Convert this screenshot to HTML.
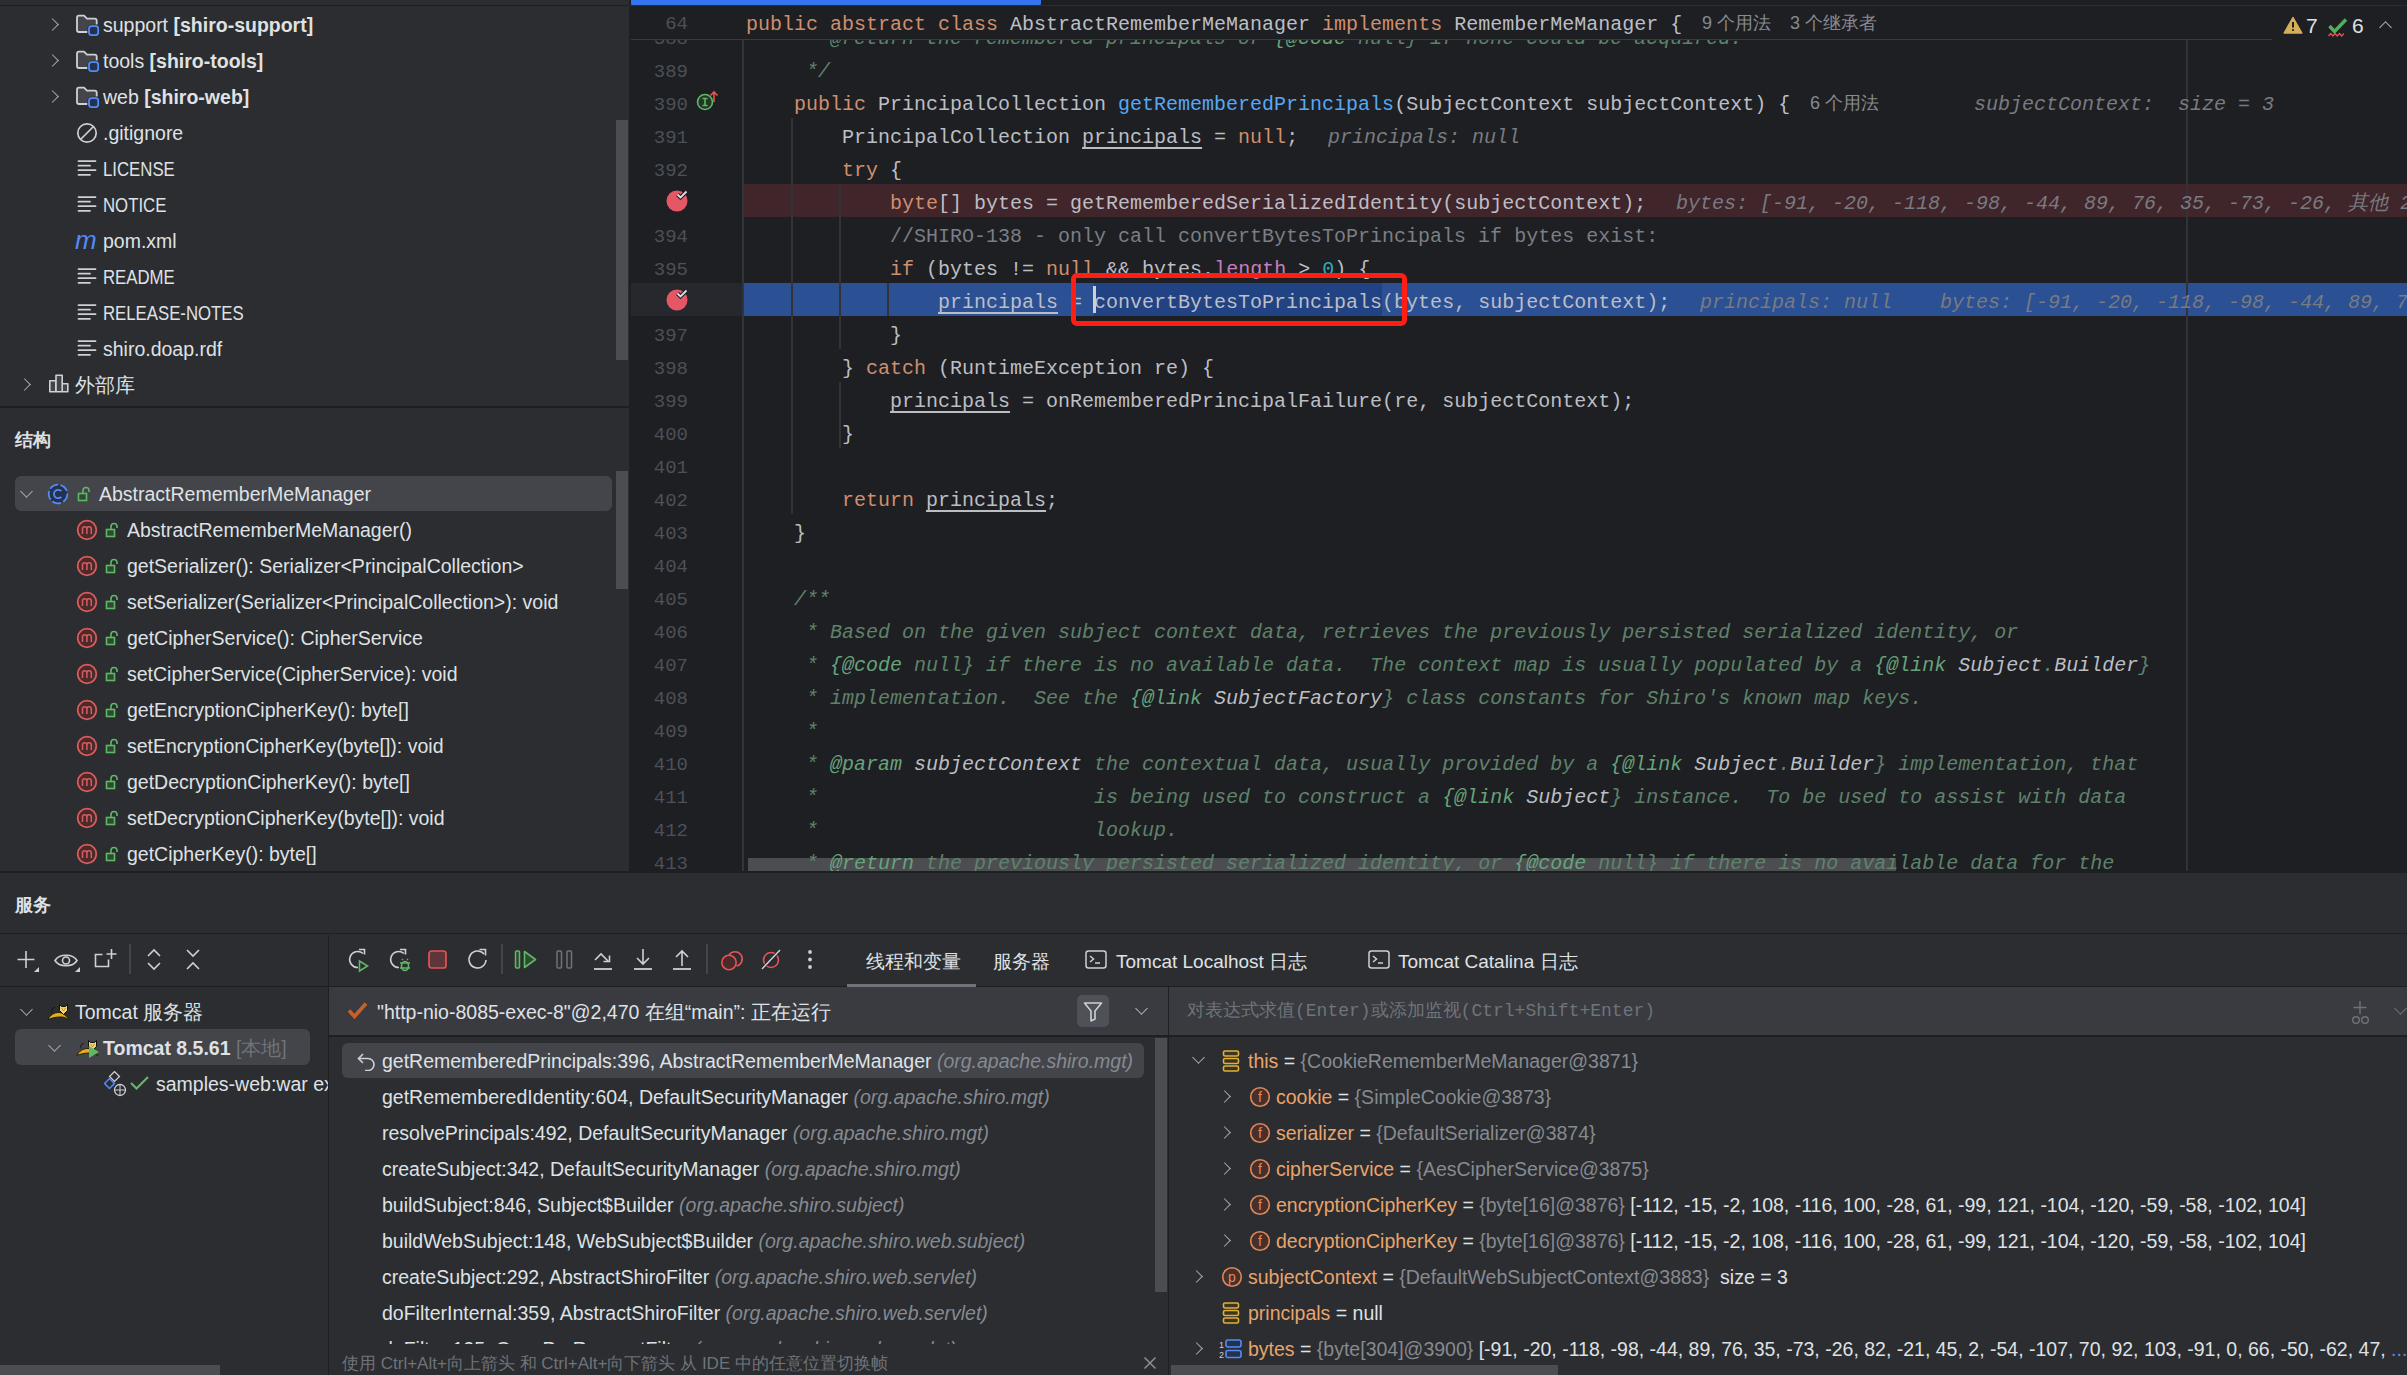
<!DOCTYPE html>
<html><head><meta charset="utf-8">
<style>
*{margin:0;padding:0;box-sizing:border-box}
html,body{width:2407px;height:1375px;overflow:hidden;background:#2B2D30;font-family:"Liberation Sans",sans-serif;color:#DFE1E5}
.a{position:absolute}
.t{position:absolute;white-space:pre;font-size:19.5px;line-height:36px;height:36px}
.b{font-weight:bold}
.m{font-family:"Liberation Mono",monospace}
.chev{position:absolute;width:9px;height:9px;border-right:1.7px solid #A8ABB0;border-bottom:1.7px solid #A8ABB0}
.cr{transform:rotate(-45deg)}
.cd{transform:rotate(45deg)}
.cu{transform:rotate(-135deg)}
/* editor */
.code{position:absolute;left:746px;white-space:pre;font-family:"Liberation Mono",monospace;font-size:20px;line-height:33px;height:33px;color:#BCBEC4}
.ln{position:absolute;left:631px;width:57px;text-align:right;white-space:pre;font-family:"Liberation Mono",monospace;font-size:19px;line-height:33px;height:33px;color:#4B5059}
.k{color:#CF8E6D}
.fn{color:#56A8F5}
.dc{color:#5F826B;font-style:italic}
.dt{color:#67A37C;font-style:italic}
.dw{color:#BCBEC4;font-style:italic}
.cm{color:#7A7E85}
.u{text-decoration:underline;text-underline-offset:4px}
.hint{color:#787B80;font-style:italic}
.num{color:#2AACB8}
.pu{color:#C77DBB}
.gr{color:#868A91}
</style></head><body>

<!-- ===== LEFT PANEL ===== -->
<div class="a" style="left:0;top:0;width:629px;height:871px;background:#2B2D30"></div>
<div class="a" style="left:0;top:5px;width:629px;height:1px;background:#1E1F22"></div>
<div class="chev cr" style="left:48px;top:20px"></div>
<svg class="a" style="left:70px;top:10px" width="40" height="30" viewBox="70 10 40 30"><path d="M79 15.6H84L87 18.6H94.7A2 2 0 0 1 96.7 20.6V32H79A2 2 0 0 1 77 30V17.6A2 2 0 0 1 79 15.6Z" fill="#43454A"/><path d="M87.5 32H79A2 2 0 0 1 77 30V17.6A2 2 0 0 1 79 15.6H84L87 18.6H94.7A2 2 0 0 1 96.7 20.6V24.5" fill="none" stroke="#CED0D6" stroke-width="1.8"/><rect x="87.5" y="24.7" width="12.2" height="11.9" rx="3.5" fill="#2B2D30"/><rect x="89" y="26.2" width="9.2" height="8.9" rx="2.5" fill="#25324D" stroke="#548AF7" stroke-width="1.8"/></svg>
<div class="t" style="left:103px;top:7px">support <span class="b">[shiro-support]</span></div>
<div class="chev cr" style="left:48px;top:56px"></div>
<svg class="a" style="left:70px;top:46px" width="40" height="30" viewBox="70 10 40 30"><path d="M79 15.6H84L87 18.6H94.7A2 2 0 0 1 96.7 20.6V32H79A2 2 0 0 1 77 30V17.6A2 2 0 0 1 79 15.6Z" fill="#43454A"/><path d="M87.5 32H79A2 2 0 0 1 77 30V17.6A2 2 0 0 1 79 15.6H84L87 18.6H94.7A2 2 0 0 1 96.7 20.6V24.5" fill="none" stroke="#CED0D6" stroke-width="1.8"/><rect x="87.5" y="24.7" width="12.2" height="11.9" rx="3.5" fill="#2B2D30"/><rect x="89" y="26.2" width="9.2" height="8.9" rx="2.5" fill="#25324D" stroke="#548AF7" stroke-width="1.8"/></svg>
<div class="t" style="left:103px;top:43px">tools <span class="b">[shiro-tools]</span></div>
<div class="chev cr" style="left:48px;top:92px"></div>
<svg class="a" style="left:70px;top:82px" width="40" height="30" viewBox="70 10 40 30"><path d="M79 15.6H84L87 18.6H94.7A2 2 0 0 1 96.7 20.6V32H79A2 2 0 0 1 77 30V17.6A2 2 0 0 1 79 15.6Z" fill="#43454A"/><path d="M87.5 32H79A2 2 0 0 1 77 30V17.6A2 2 0 0 1 79 15.6H84L87 18.6H94.7A2 2 0 0 1 96.7 20.6V24.5" fill="none" stroke="#CED0D6" stroke-width="1.8"/><rect x="87.5" y="24.7" width="12.2" height="11.9" rx="3.5" fill="#2B2D30"/><rect x="89" y="26.2" width="9.2" height="8.9" rx="2.5" fill="#25324D" stroke="#548AF7" stroke-width="1.8"/></svg>
<div class="t" style="left:103px;top:79px">web <span class="b">[shiro-web]</span></div>
<svg class="a" style="left:76px;top:122px" width="22" height="22" viewBox="0 0 22 22"><circle cx="11" cy="11" r="9.2" fill="none" stroke="#CED0D6" stroke-width="1.7"/><path d="M4.5 17.5L17.5 4.5" stroke="#CED0D6" stroke-width="1.7"/></svg>
<div class="t" style="left:103px;top:115px">.gitignore</div>
<svg class="a" style="left:70px;top:159px" width="30" height="20" viewBox="0 0 30 20"><path d="M8.5 2.1h17M8.5 6.7h11.5M8.5 11.2h17M8.5 15.8h11.5" stroke="#CED0D6" stroke-width="1.8" stroke-linecap="round"/></svg>
<div class="t" style="left:103px;top:151px;transform:scaleX(0.86);transform-origin:0 0">LICENSE</div>
<svg class="a" style="left:70px;top:195px" width="30" height="20" viewBox="0 0 30 20"><path d="M8.5 2.1h17M8.5 6.7h11.5M8.5 11.2h17M8.5 15.8h11.5" stroke="#CED0D6" stroke-width="1.8" stroke-linecap="round"/></svg>
<div class="t" style="left:103px;top:187px;transform:scaleX(0.86);transform-origin:0 0">NOTICE</div>
<svg class="a" style="left:70px;top:267px" width="30" height="20" viewBox="0 0 30 20"><path d="M8.5 2.1h17M8.5 6.7h11.5M8.5 11.2h17M8.5 15.8h11.5" stroke="#CED0D6" stroke-width="1.8" stroke-linecap="round"/></svg>
<div class="t" style="left:103px;top:259px;transform:scaleX(0.86);transform-origin:0 0">README</div>
<svg class="a" style="left:70px;top:303px" width="30" height="20" viewBox="0 0 30 20"><path d="M8.5 2.1h17M8.5 6.7h11.5M8.5 11.2h17M8.5 15.8h11.5" stroke="#CED0D6" stroke-width="1.8" stroke-linecap="round"/></svg>
<div class="t" style="left:103px;top:295px;transform:scaleX(0.86);transform-origin:0 0">RELEASE-NOTES</div>
<svg class="a" style="left:70px;top:339px" width="30" height="20" viewBox="0 0 30 20"><path d="M8.5 2.1h17M8.5 6.7h11.5M8.5 11.2h17M8.5 15.8h11.5" stroke="#CED0D6" stroke-width="1.8" stroke-linecap="round"/></svg>
<div class="t" style="left:103px;top:331px">shiro.doap.rdf</div>
<div class="a" style="left:75px;top:222px;font-size:26px;line-height:36px;font-style:italic;color:#548AF7;font-family:'Liberation Sans',sans-serif">m</div>
<div class="t" style="left:103px;top:223px">pom.xml</div>
<div class="chev cr" style="left:20px;top:380px"></div>
<svg class="a" style="left:45px;top:370px" width="30" height="26" viewBox="45 370 30 26"><path d="M49.8 380.8h6v11h-6zM56 375.3h6.2v16.5H56zM62.2 383.8h5.6v8h-5.6z" fill="#43454A" stroke="#CED0D6" stroke-width="1.6" stroke-linejoin="round"/></svg>
<div class="t" style="left:75px;top:367px">外部库</div>
<div class="a" style="left:616px;top:120px;width:12px;height:240px;background:#4B4D51"></div>
<div class="a" style="left:0;top:406px;width:629px;height:2px;background:#1E1F22"></div>
<div class="t b" style="left:15px;top:422px;font-size:18px">结构</div>
<div class="a" style="left:15px;top:476px;width:597px;height:35px;border-radius:6px;background:#43454A"></div>
<div class="chev cd" style="left:22px;top:487px"></div>
<svg class="a" style="left:47px;top:483px" width="22" height="22" viewBox="0 0 22 22"><circle cx="11" cy="11" r="9.3" fill="#25324D" stroke="#548AF7" stroke-width="1.8" stroke-dasharray="9 2.5"/><path d="M14.3 8.2a4.2 4.2 0 1 0 0 5.6" fill="none" stroke="#548AF7" stroke-width="1.8"/></svg>
<svg class="a" style="left:77px;top:486px" width="14" height="16" viewBox="0 0 14 16"><rect x="1.5" y="7.5" width="8" height="7" fill="#2E4A33" stroke="#5FB865" stroke-width="1.6"/><path d="M6 7.5V4.5a3 3 0 0 1 6 0V6" fill="none" stroke="#5FB865" stroke-width="1.6"/></svg>
<div class="t" style="left:99px;top:476px">AbstractRememberMeManager</div>
<svg class="a" style="left:76px;top:519px" width="22" height="22" viewBox="0 0 22 22"><circle cx="11" cy="11" r="9.3" fill="#4A2A2C" stroke="#DB5C5C" stroke-width="1.8"/><path d="M6.5 15V8.5M6.5 10a2.2 2.2 0 0 1 4.4 0V15M10.9 10a2.2 2.2 0 0 1 4.4 0V15" fill="none" stroke="#DB5C5C" stroke-width="1.5"/></svg>
<svg class="a" style="left:105px;top:522px" width="14" height="16" viewBox="0 0 14 16"><rect x="1.5" y="7.5" width="8" height="7" fill="#2E4A33" stroke="#5FB865" stroke-width="1.6"/><path d="M6 7.5V4.5a3 3 0 0 1 6 0V6" fill="none" stroke="#5FB865" stroke-width="1.6"/></svg>
<div class="t" style="left:127px;top:512px">AbstractRememberMeManager()</div>
<svg class="a" style="left:76px;top:555px" width="22" height="22" viewBox="0 0 22 22"><circle cx="11" cy="11" r="9.3" fill="#4A2A2C" stroke="#DB5C5C" stroke-width="1.8"/><path d="M6.5 15V8.5M6.5 10a2.2 2.2 0 0 1 4.4 0V15M10.9 10a2.2 2.2 0 0 1 4.4 0V15" fill="none" stroke="#DB5C5C" stroke-width="1.5"/></svg>
<svg class="a" style="left:105px;top:558px" width="14" height="16" viewBox="0 0 14 16"><rect x="1.5" y="7.5" width="8" height="7" fill="#2E4A33" stroke="#5FB865" stroke-width="1.6"/><path d="M6 7.5V4.5a3 3 0 0 1 6 0V6" fill="none" stroke="#5FB865" stroke-width="1.6"/></svg>
<div class="t" style="left:127px;top:548px">getSerializer(): Serializer&lt;PrincipalCollection&gt;</div>
<svg class="a" style="left:76px;top:591px" width="22" height="22" viewBox="0 0 22 22"><circle cx="11" cy="11" r="9.3" fill="#4A2A2C" stroke="#DB5C5C" stroke-width="1.8"/><path d="M6.5 15V8.5M6.5 10a2.2 2.2 0 0 1 4.4 0V15M10.9 10a2.2 2.2 0 0 1 4.4 0V15" fill="none" stroke="#DB5C5C" stroke-width="1.5"/></svg>
<svg class="a" style="left:105px;top:594px" width="14" height="16" viewBox="0 0 14 16"><rect x="1.5" y="7.5" width="8" height="7" fill="#2E4A33" stroke="#5FB865" stroke-width="1.6"/><path d="M6 7.5V4.5a3 3 0 0 1 6 0V6" fill="none" stroke="#5FB865" stroke-width="1.6"/></svg>
<div class="t" style="left:127px;top:584px">setSerializer(Serializer&lt;PrincipalCollection&gt;): void</div>
<svg class="a" style="left:76px;top:627px" width="22" height="22" viewBox="0 0 22 22"><circle cx="11" cy="11" r="9.3" fill="#4A2A2C" stroke="#DB5C5C" stroke-width="1.8"/><path d="M6.5 15V8.5M6.5 10a2.2 2.2 0 0 1 4.4 0V15M10.9 10a2.2 2.2 0 0 1 4.4 0V15" fill="none" stroke="#DB5C5C" stroke-width="1.5"/></svg>
<svg class="a" style="left:105px;top:630px" width="14" height="16" viewBox="0 0 14 16"><rect x="1.5" y="7.5" width="8" height="7" fill="#2E4A33" stroke="#5FB865" stroke-width="1.6"/><path d="M6 7.5V4.5a3 3 0 0 1 6 0V6" fill="none" stroke="#5FB865" stroke-width="1.6"/></svg>
<div class="t" style="left:127px;top:620px">getCipherService(): CipherService</div>
<svg class="a" style="left:76px;top:663px" width="22" height="22" viewBox="0 0 22 22"><circle cx="11" cy="11" r="9.3" fill="#4A2A2C" stroke="#DB5C5C" stroke-width="1.8"/><path d="M6.5 15V8.5M6.5 10a2.2 2.2 0 0 1 4.4 0V15M10.9 10a2.2 2.2 0 0 1 4.4 0V15" fill="none" stroke="#DB5C5C" stroke-width="1.5"/></svg>
<svg class="a" style="left:105px;top:666px" width="14" height="16" viewBox="0 0 14 16"><rect x="1.5" y="7.5" width="8" height="7" fill="#2E4A33" stroke="#5FB865" stroke-width="1.6"/><path d="M6 7.5V4.5a3 3 0 0 1 6 0V6" fill="none" stroke="#5FB865" stroke-width="1.6"/></svg>
<div class="t" style="left:127px;top:656px">setCipherService(CipherService): void</div>
<svg class="a" style="left:76px;top:699px" width="22" height="22" viewBox="0 0 22 22"><circle cx="11" cy="11" r="9.3" fill="#4A2A2C" stroke="#DB5C5C" stroke-width="1.8"/><path d="M6.5 15V8.5M6.5 10a2.2 2.2 0 0 1 4.4 0V15M10.9 10a2.2 2.2 0 0 1 4.4 0V15" fill="none" stroke="#DB5C5C" stroke-width="1.5"/></svg>
<svg class="a" style="left:105px;top:702px" width="14" height="16" viewBox="0 0 14 16"><rect x="1.5" y="7.5" width="8" height="7" fill="#2E4A33" stroke="#5FB865" stroke-width="1.6"/><path d="M6 7.5V4.5a3 3 0 0 1 6 0V6" fill="none" stroke="#5FB865" stroke-width="1.6"/></svg>
<div class="t" style="left:127px;top:692px">getEncryptionCipherKey(): byte[]</div>
<svg class="a" style="left:76px;top:735px" width="22" height="22" viewBox="0 0 22 22"><circle cx="11" cy="11" r="9.3" fill="#4A2A2C" stroke="#DB5C5C" stroke-width="1.8"/><path d="M6.5 15V8.5M6.5 10a2.2 2.2 0 0 1 4.4 0V15M10.9 10a2.2 2.2 0 0 1 4.4 0V15" fill="none" stroke="#DB5C5C" stroke-width="1.5"/></svg>
<svg class="a" style="left:105px;top:738px" width="14" height="16" viewBox="0 0 14 16"><rect x="1.5" y="7.5" width="8" height="7" fill="#2E4A33" stroke="#5FB865" stroke-width="1.6"/><path d="M6 7.5V4.5a3 3 0 0 1 6 0V6" fill="none" stroke="#5FB865" stroke-width="1.6"/></svg>
<div class="t" style="left:127px;top:728px">setEncryptionCipherKey(byte[]): void</div>
<svg class="a" style="left:76px;top:771px" width="22" height="22" viewBox="0 0 22 22"><circle cx="11" cy="11" r="9.3" fill="#4A2A2C" stroke="#DB5C5C" stroke-width="1.8"/><path d="M6.5 15V8.5M6.5 10a2.2 2.2 0 0 1 4.4 0V15M10.9 10a2.2 2.2 0 0 1 4.4 0V15" fill="none" stroke="#DB5C5C" stroke-width="1.5"/></svg>
<svg class="a" style="left:105px;top:774px" width="14" height="16" viewBox="0 0 14 16"><rect x="1.5" y="7.5" width="8" height="7" fill="#2E4A33" stroke="#5FB865" stroke-width="1.6"/><path d="M6 7.5V4.5a3 3 0 0 1 6 0V6" fill="none" stroke="#5FB865" stroke-width="1.6"/></svg>
<div class="t" style="left:127px;top:764px">getDecryptionCipherKey(): byte[]</div>
<svg class="a" style="left:76px;top:807px" width="22" height="22" viewBox="0 0 22 22"><circle cx="11" cy="11" r="9.3" fill="#4A2A2C" stroke="#DB5C5C" stroke-width="1.8"/><path d="M6.5 15V8.5M6.5 10a2.2 2.2 0 0 1 4.4 0V15M10.9 10a2.2 2.2 0 0 1 4.4 0V15" fill="none" stroke="#DB5C5C" stroke-width="1.5"/></svg>
<svg class="a" style="left:105px;top:810px" width="14" height="16" viewBox="0 0 14 16"><rect x="1.5" y="7.5" width="8" height="7" fill="#2E4A33" stroke="#5FB865" stroke-width="1.6"/><path d="M6 7.5V4.5a3 3 0 0 1 6 0V6" fill="none" stroke="#5FB865" stroke-width="1.6"/></svg>
<div class="t" style="left:127px;top:800px">setDecryptionCipherKey(byte[]): void</div>
<svg class="a" style="left:76px;top:843px" width="22" height="22" viewBox="0 0 22 22"><circle cx="11" cy="11" r="9.3" fill="#4A2A2C" stroke="#DB5C5C" stroke-width="1.8"/><path d="M6.5 15V8.5M6.5 10a2.2 2.2 0 0 1 4.4 0V15M10.9 10a2.2 2.2 0 0 1 4.4 0V15" fill="none" stroke="#DB5C5C" stroke-width="1.5"/></svg>
<svg class="a" style="left:105px;top:846px" width="14" height="16" viewBox="0 0 14 16"><rect x="1.5" y="7.5" width="8" height="7" fill="#2E4A33" stroke="#5FB865" stroke-width="1.6"/><path d="M6 7.5V4.5a3 3 0 0 1 6 0V6" fill="none" stroke="#5FB865" stroke-width="1.6"/></svg>
<div class="t" style="left:127px;top:836px">getCipherKey(): byte[]</div>
<div class="a" style="left:616px;top:471px;width:12px;height:118px;background:#4B4D51"></div>

<!-- ===== EDITOR ===== -->
<div class="a" style="left:629px;top:0;width:1778px;height:871px;background:#1E1F22"></div>
<!--EDITOR-->
<div class="a" style="left:631px;top:0;width:410px;height:6px;border-radius:0 0 3px 3px;background:#3574F0"></div>
<div class="a" style="left:629px;top:5px;width:1778px;height:1px;background:#2B2D30"></div>
<div class="a" style="left:744px;top:184px;width:1663px;height:33px;background:#40252B"></div>
<div class="a" style="left:631px;top:283px;width:111px;height:33px;background:#26282D"></div>
<div class="a" style="left:744px;top:283px;width:1663px;height:33px;background:#2B5094"></div>
<div class="a" style="left:1094px;top:283px;width:288px;height:33px;background:#214283"></div>
<div class="a" style="left:748px;top:858px;width:1148px;height:13px;background:#4B4D51"></div>
<div class="a" style="left:742px;top:40px;width:2px;height:831px;background:#313438"></div>
<div class="a" style="left:2186px;top:40px;width:2px;height:831px;background:#313337"></div>
<div class="a" style="left:791px;top:118px;width:2px;height:396px;background:#313337"></div>
<div class="a" style="left:839px;top:184px;width:2px;height:165px;background:#313337"></div>
<div class="a" style="left:839px;top:382px;width:2px;height:66px;background:#313337"></div>
<div class="a" style="left:887px;top:283px;width:2px;height:33px;background:#313337"></div>
<div class="code" style="top:22px">     <span class="dc">* @return the remembered principals or </span><span class="dt">{@code </span><span class="dc">null} if none could be acquired.</span></div>
<div class="code" style="top:55px"><span class="dc">     */</span></div>
<div class="code" style="top:88px">    <span class="k">public </span>PrincipalCollection <span class="fn">getRememberedPrincipals</span>(SubjectContext subjectContext) {</div>
<div class="code" style="top:121px">        PrincipalCollection <span class="u">principals</span> = <span class="k">null</span>;</div>
<div class="code" style="top:154px">        <span class="k">try</span> {</div>
<div class="code" style="top:187px">            <span class="k">byte</span>[] bytes = getRememberedSerializedIdentity(subjectContext);</div>
<div class="code" style="top:220px"><span class="cm">            //SHIRO-138 - only call convertBytesToPrincipals if bytes exist:</span></div>
<div class="code" style="top:253px">            <span class="k">if</span> (bytes != <span class="k">null</span> &amp;&amp; bytes.<span class="pu">length</span> &gt; <span class="num">0</span>) {</div>
<div class="code" style="top:286px">                <span class="u">principals</span> = convertBytesToPrincipals(bytes, subjectContext);</div>
<div class="code" style="top:319px">            }</div>
<div class="code" style="top:352px">        } <span class="k">catch</span> (RuntimeException re) {</div>
<div class="code" style="top:385px">            <span class="u">principals</span> = onRememberedPrincipalFailure(re, subjectContext);</div>
<div class="code" style="top:418px">        }</div>
<div class="code" style="top:484px">        <span class="k">return </span><span class="u">principals</span>;</div>
<div class="code" style="top:517px">    }</div>
<div class="code" style="top:583px"><span class="dc">    /**</span></div>
<div class="code" style="top:616px">     <span class="dc">* Based on the given subject context data, retrieves the previously persisted serialized identity, or</span></div>
<div class="code" style="top:649px">     <span class="dc">* </span><span class="dt">{@code </span><span class="dc">null} if there is no available data.  The context map is usually populated by a </span><span class="dt">{@link </span><span class="dw">Subject</span><span class="dc">.</span><span class="dw">Builder</span><span class="dc">}</span></div>
<div class="code" style="top:682px">     <span class="dc">* implementation.  See the </span><span class="dt">{@link </span><span class="dw">SubjectFactory</span><span class="dc">} class constants for Shiro's known map keys.</span></div>
<div class="code" style="top:715px">     <span class="dc">*</span></div>
<div class="code" style="top:748px">     <span class="dc">* </span><span class="dt">@param </span><span class="dw">subjectContext</span><span class="dc"> the contextual data, usually provided by a </span><span class="dt">{@link </span><span class="dw">Subject</span><span class="dc">.</span><span class="dw">Builder</span><span class="dc">} implementation, that</span></div>
<div class="code" style="top:781px">     <span class="dc">*                       is being used to construct a </span><span class="dt">{@link </span><span class="dw">Subject</span><span class="dc">} instance.  To be used to assist with data</span></div>
<div class="code" style="top:814px">     <span class="dc">*                       lookup.</span></div>
<div class="code" style="top:847px">     <span class="dc">* </span><span class="dt">@return </span><span class="dc">the previously persisted serialized identity, or </span><span class="dt">{@code </span><span class="dc">null} if there is no available data for the</span></div>
<div class="ln" style="top:23px">388</div>
<div class="ln" style="top:56px">389</div>
<div class="ln" style="top:89px">390</div>
<div class="ln" style="top:122px">391</div>
<div class="ln" style="top:155px">392</div>
<div class="ln" style="top:221px">394</div>
<div class="ln" style="top:254px">395</div>
<div class="ln" style="top:320px">397</div>
<div class="ln" style="top:353px">398</div>
<div class="ln" style="top:386px">399</div>
<div class="ln" style="top:419px">400</div>
<div class="ln" style="top:452px">401</div>
<div class="ln" style="top:485px">402</div>
<div class="ln" style="top:518px">403</div>
<div class="ln" style="top:551px">404</div>
<div class="ln" style="top:584px">405</div>
<div class="ln" style="top:617px">406</div>
<div class="ln" style="top:650px">407</div>
<div class="ln" style="top:683px">408</div>
<div class="ln" style="top:716px">409</div>
<div class="ln" style="top:749px">410</div>
<div class="ln" style="top:782px">411</div>
<div class="ln" style="top:815px">412</div>
<div class="ln" style="top:848px">413</div>
<div class="t gr" style="left:1810px;top:85px;font-size:18px">6 个用法</div>
<div class="code hint" style="left:1974px;top:88px">subjectContext:  size = 3</div>
<div class="code hint" style="left:1328px;top:121px">principals: null</div>
<div class="code hint" style="left:1676px;top:187px">bytes: [-91, -20, -118, -98, -44, 89, 76, 35, -73, -26, 其他 2</div>
<div class="code hint" style="left:1700px;top:286px">principals: null</div>
<div class="code hint hb" style="left:1940px;top:286px">bytes: [-91, -20, -118, -98, -44, 89, 7</div>
<div class="a" style="left:629px;top:6px;width:1778px;height:34px;background:#1E1F22"></div>
<div class="a" style="left:631px;top:39px;width:1641px;height:1px;background:#393B40"></div>
<div class="ln" style="top:8px">64</div>
<div class="code" style="top:8px"><span class="k">public abstract class </span>AbstractRememberMeManager <span class="k">implements </span>RememberMeManager {</div>
<div class="t gr" style="left:1702px;top:5px;font-size:18px">9 个用法</div>
<div class="t gr" style="left:1790px;top:5px;font-size:18px">3 个继承者</div>
<svg class="a" style="left:2283px;top:16px" width="20" height="19" viewBox="0 0 20 19"><path d="M10 1.5L18.8 17H1.2Z" fill="#D6AE58" stroke="#D6AE58" stroke-width="1.5" stroke-linejoin="round"/><path d="M10 6v5.5" stroke="#1E1F22" stroke-width="2"/><circle cx="10" cy="14" r="1.1" fill="#1E1F22"/></svg>
<div class="t" style="left:2306px;top:8px;font-size:21px">7</div>
<svg class="a" style="left:2327px;top:16px" width="22" height="22" viewBox="0 0 22 22"><path d="M2.5 10l5 5.5L19 3.5" fill="none" stroke="#4FAF5B" stroke-width="3.4"/><path d="M1.5 20l2.2-2.5 2.2 2.5 2.2-2.5 2.2 2.5 2.2-2.5 2.2 2.5 2.2-2.5" fill="none" stroke="#E55353" stroke-width="1.2"/></svg>
<div class="t" style="left:2352px;top:8px;font-size:21px">6</div>
<div class="chev cu" style="left:2381px;top:23px;border-color:#B0B3B8"></div>
<svg class="a" style="left:665px;top:186px" width="26" height="26" viewBox="0 0 26 26"><circle cx="12" cy="15" r="10.5" fill="#E55765"/><path d="M12.5 8.5l3 3 6-6" fill="none" stroke="#1E1F22" stroke-width="4"/><path d="M12.5 8.5l3 3 6-6" fill="none" stroke="#DFE1E5" stroke-width="1.8"/></svg>
<svg class="a" style="left:665px;top:285px" width="26" height="26" viewBox="0 0 26 26"><circle cx="12" cy="15" r="10.5" fill="#E55765"/><path d="M12.5 8.5l3 3 6-6" fill="none" stroke="#1E1F22" stroke-width="4"/><path d="M12.5 8.5l3 3 6-6" fill="none" stroke="#DFE1E5" stroke-width="1.8"/></svg>
<svg class="a" style="left:696px;top:90px" width="24" height="22" viewBox="0 0 24 22"><circle cx="9" cy="12" r="7.5" fill="#253627" stroke="#5FB865" stroke-width="1.6"/><path d="M6.5 8.5h5M9 8.5v7M6.5 15.5h5" stroke="#5FB865" stroke-width="1.6"/><path d="M18 12V2M14.5 5.5L18 2l3.5 3.5" fill="none" stroke="#E55353" stroke-width="1.6"/></svg>
<div class="a" style="left:1071px;top:273px;width:336px;height:53px;border:5px solid #FF1E14;border-radius:6px"></div>
<div class="a" style="left:1093px;top:286px;width:3px;height:27px;background:#CED0D6"></div>
<!--/EDITOR-->

<!-- ===== BOTTOM PANEL ===== -->
<div class="a" style="left:0;top:871px;width:2407px;height:2px;background:#1E1F22"></div>
<!--BOTTOM-->
<div class="t b" style="left:15px;top:887px;font-size:18px">服务</div>
<div class="a" style="left:0;top:933px;width:2407px;height:1px;background:#1E1F22"></div>
<div class="a" style="left:0;top:986px;width:328px;height:1px;background:#1E1F22"></div>
<div class="a" style="left:328px;top:935px;width:1px;height:440px;background:#1E1F22"></div>
<div class="a" style="left:329px;top:986px;width:2078px;height:1px;background:#1E1F22"></div>
<svg class="a" style="left:16px;top:949px" width="24" height="24" viewBox="0 0 24 24"><path d="M10 2v17M1.5 10.5h17" stroke="#CED0D6" stroke-width="1.6"/><path d="M23 18v5h-5z" fill="#CED0D6"/></svg>
<svg class="a" style="left:53px;top:949px" width="28" height="24" viewBox="0 0 28 24"><path d="M2 11.5c4-7 18-7 22 0c-4 7-18 7-22 0z" fill="none" stroke="#CED0D6" stroke-width="1.6"/><circle cx="13" cy="11.5" r="3.5" fill="none" stroke="#CED0D6" stroke-width="1.6"/><path d="M27 18v5h-5z" fill="#CED0D6"/></svg>
<svg class="a" style="left:93px;top:947px" width="26" height="24" viewBox="0 0 26 24"><path d="M9.5 7.5h-7v12h13v-7" fill="none" stroke="#CED0D6" stroke-width="1.6"/><path d="M18.5 2v10M13.5 7h10" stroke="#CED0D6" stroke-width="1.6"/></svg>
<div class="a" style="left:129px;top:944px;width:2px;height:30px;background:#43454A"></div>
<svg class="a" style="left:143px;top:947px" width="22" height="26" viewBox="0 0 22 26"><path d="M5 9l6-6 6 6M5 16l6 6 6-6" fill="none" stroke="#CED0D6" stroke-width="1.6"/></svg>
<svg class="a" style="left:182px;top:947px" width="22" height="26" viewBox="0 0 22 26"><path d="M5 3l6 6 6-6M5 22l6-6 6 6" fill="none" stroke="#CED0D6" stroke-width="1.6"/></svg>
<svg class="a" style="left:346px;top:947px" width="26" height="26" viewBox="0 0 26 26"><path d="M17 6.5a8 8 0 1 0-5 14" fill="none" stroke="#CED0D6" stroke-width="1.6"/><path d="M13 2.5h5.5v5" fill="none" stroke="#CED0D6" stroke-width="1.6"/><path d="M13.5 14v10l8-5z" fill="none" stroke="#5FB865" stroke-width="1.6"/></svg>
<svg class="a" style="left:387px;top:947px" width="26" height="26" viewBox="0 0 26 26"><path d="M17 6.5a8 8 0 1 0-5 14" fill="none" stroke="#CED0D6" stroke-width="1.6"/><path d="M13 2.5h5.5v5" fill="none" stroke="#CED0D6" stroke-width="1.6"/><ellipse cx="18" cy="19" rx="3.5" ry="4.5" fill="none" stroke="#5FB865" stroke-width="1.6"/><path d="M13 16h10M13 21h10M16 13l-1-1M20 13l1-1" stroke="#5FB865" stroke-width="1.4"/></svg>
<svg class="a" style="left:427px;top:949px" width="22" height="22" viewBox="0 0 22 22"><rect x="2" y="2" width="17" height="17" rx="2.5" fill="#5E3538" stroke="#E55353" stroke-width="1.7"/></svg>
<svg class="a" style="left:465px;top:947px" width="26" height="26" viewBox="0 0 26 26"><path d="M19 7a8.5 8.5 0 1 0 2 6" fill="none" stroke="#CED0D6" stroke-width="1.6"/><path d="M14.5 2.5h6v6" fill="none" stroke="#CED0D6" stroke-width="1.6"/></svg>
<div class="a" style="left:501px;top:944px;width:2px;height:30px;background:#43454A"></div>
<svg class="a" style="left:514px;top:949px" width="24" height="22" viewBox="0 0 24 22"><rect x="1.5" y="2" width="4" height="17" rx="1" fill="#2E4A33" stroke="#5FB865" stroke-width="1.5"/><path d="M10.5 2.5v16l11-8z" fill="#2E4A33" stroke="#5FB865" stroke-width="1.6" stroke-linejoin="round"/></svg>
<svg class="a" style="left:555px;top:949px" width="22" height="22" viewBox="0 0 22 22"><rect x="2" y="2" width="4.5" height="17" rx="1" fill="none" stroke="#6F737A" stroke-width="1.5"/><rect x="12" y="2" width="4.5" height="17" rx="1" fill="none" stroke="#6F737A" stroke-width="1.5"/></svg>
<svg class="a" style="left:592px;top:947px" width="24" height="26" viewBox="0 0 24 26"><path d="M3 13l6-6 7 7" fill="none" stroke="#CED0D6" stroke-width="1.6"/><path d="M11.5 14.5h6v-6" fill="none" stroke="#CED0D6" stroke-width="1.6"/><path d="M2 22h18" stroke="#CED0D6" stroke-width="1.8"/></svg>
<svg class="a" style="left:632px;top:947px" width="24" height="26" viewBox="0 0 24 26"><path d="M11 2v15M5 11l6 6 6-6" fill="none" stroke="#CED0D6" stroke-width="1.6"/><path d="M2 22h18" stroke="#CED0D6" stroke-width="1.8"/></svg>
<svg class="a" style="left:671px;top:947px" width="24" height="26" viewBox="0 0 24 26"><path d="M11 19V4M5 10l6-6 6 6" fill="none" stroke="#CED0D6" stroke-width="1.6"/><path d="M2 22h18" stroke="#CED0D6" stroke-width="1.8"/></svg>
<div class="a" style="left:706px;top:944px;width:2px;height:30px;background:#43454A"></div>
<svg class="a" style="left:720px;top:947px" width="26" height="26" viewBox="0 0 26 26"><circle cx="9" cy="15.5" r="7.2" fill="#4A2A2C" stroke="#E55353" stroke-width="1.6"/><path d="M9 8a7.2 7.2 0 1 1 7.5 11" fill="none" stroke="#E55353" stroke-width="1.6"/></svg>
<svg class="a" style="left:759px;top:947px" width="26" height="26" viewBox="0 0 26 26"><circle cx="12" cy="13" r="7.5" fill="none" stroke="#E55353" stroke-width="1.6"/><path d="M3 22L21 3" stroke="#1E1F22" stroke-width="3"/><path d="M3 22L21 3" stroke="#CED0D6" stroke-width="1.6"/></svg>
<svg class="a" style="left:804px;top:948px" width="12" height="24" viewBox="0 0 12 24"><circle cx="6" cy="4" r="1.9" fill="#CED0D6"/><circle cx="6" cy="11.5" r="1.9" fill="#CED0D6"/><circle cx="6" cy="19" r="1.9" fill="#CED0D6"/></svg>
<div class="t" style="left:866px;top:944px;font-size:19px">线程和变量</div>
<div class="a" style="left:847px;top:984px;width:129px;height:3px;background:#6F737A"></div>
<div class="t" style="left:993px;top:944px;font-size:19px">服务器</div>
<svg class="a" style="left:1085px;top:950px" width="23" height="20" viewBox="0 0 23 20"><rect x="1" y="1" width="20" height="17" rx="2.5" fill="none" stroke="#CED0D6" stroke-width="1.5"/><path d="M5 6l3.5 3L5 12M10 13h5" fill="none" stroke="#CED0D6" stroke-width="1.5"/></svg>
<div class="t" style="left:1116px;top:944px;font-size:19px">Tomcat Localhost 日志</div>
<svg class="a" style="left:1368px;top:950px" width="23" height="20" viewBox="0 0 23 20"><rect x="1" y="1" width="20" height="17" rx="2.5" fill="none" stroke="#CED0D6" stroke-width="1.5"/><path d="M5 6l3.5 3L5 12M10 13h5" fill="none" stroke="#CED0D6" stroke-width="1.5"/></svg>
<div class="t" style="left:1398px;top:944px;font-size:19px">Tomcat Catalina 日志</div>
<div class="chev cd" style="left:22px;top:1005px"></div>
<svg class="a" style="left:47px;top:1003px" width="24" height="18" viewBox="0 0 24 18"><path d="M1 16.5C3 12 7 9.5 12 9.5c3 0 6 2 10 7c-3-1.5-6-3-9-2.5C8 14 5 15 1 16.5z" fill="#E2AE1E" stroke="#1A1508" stroke-width=".9"/><path d="M5 9.5c-1-3 1-5 3-5" fill="none" stroke="#111" stroke-width="1"/><path d="M12.5 1.5l2 2h4l2-2v6l-4 4l-4-4z" fill="#EFD472" stroke="#111" stroke-width="1"/><path d="M14.5 5l2 3l2-3" fill="none" stroke="#B08A20" stroke-width=".8"/></svg>
<div class="t" style="left:75px;top:994px">Tomcat 服务器</div>
<div class="a" style="left:15px;top:1029px;width:295px;height:36px;border-radius:6px;background:#43454A"></div>
<div class="chev cd" style="left:50px;top:1041px"></div>
<svg class="a" style="left:76px;top:1039px" width="24" height="18" viewBox="0 0 24 18"><path d="M1 16.5C3 12 7 9.5 12 9.5c3 0 6 2 10 7c-3-1.5-6-3-9-2.5C8 14 5 15 1 16.5z" fill="#E2AE1E" stroke="#1A1508" stroke-width=".9"/><path d="M5 9.5c-1-3 1-5 3-5" fill="none" stroke="#111" stroke-width="1"/><path d="M12.5 1.5l2 2h4l2-2v6l-4 4l-4-4z" fill="#EFD472" stroke="#111" stroke-width="1"/><path d="M14.5 5l2 3l2-3" fill="none" stroke="#B08A20" stroke-width=".8"/></svg>
<svg class="a" style="left:88px;top:1045px" width="12" height="14" viewBox="0 0 12 14"><path d="M1 1v12l10-6z" fill="#5FB865"/></svg>
<div class="t b" style="left:103px;top:1030px">Tomcat 8.5.61 <span style="font-weight:normal;color:#6F737A">[本地]</span></div>
<svg class="a" style="left:104px;top:1071px" width="28" height="26" viewBox="0 0 28 26"><rect x="7" y="2" width="7" height="7" transform="rotate(45 10.5 5.5)" fill="none" stroke="#CED0D6" stroke-width="1.3"/><rect x="2" y="9" width="7" height="7" transform="rotate(45 5.5 12.5)" fill="none" stroke="#548AF7" stroke-width="1.5"/><circle cx="16" cy="19" r="5.5" fill="#2B2D30" stroke="#CED0D6" stroke-width="1.3"/><path d="M10.5 19h11M16 13.5v11" stroke="#CED0D6" stroke-width="1"/></svg>
<svg class="a" style="left:129px;top:1074px" width="22" height="18" viewBox="0 0 22 18"><path d="M2 9l5.5 5.5L19 3" fill="none" stroke="#5FB865" stroke-width="2.2"/></svg>
<div class="a" style="left:0;top:1066px;width:328px;height:36px;overflow:hidden"><div class="t" style="left:156px;top:0">samples-web:war explo</div></div>
<div class="a" style="left:0;top:1365px;width:220px;height:10px;background:#4B4D51"></div>
<div class="a" style="left:329px;top:987px;width:839px;height:48px;background:#393B40"></div>
<div class="a" style="left:329px;top:1035px;width:839px;height:2px;background:#1E1F22"></div>
<svg class="a" style="left:346px;top:1000px" width="24" height="22" viewBox="0 0 24 22"><path d="M3 10.5l5.5 6L20 3.5" fill="none" stroke="#C8602A" stroke-width="3.6"/></svg>
<div class="t" style="left:377px;top:994px">"http-nio-8085-exec-8"@2,470 在组“main”: 正在运行</div>
<div class="a" style="left:1077px;top:995px;width:32px;height:32px;border-radius:5px;background:#4E5157"></div>
<svg class="a" style="left:1082px;top:1000px" width="22" height="22" viewBox="0 0 22 22"><path d="M2.5 3h17l-6.5 8v8l-4 2v-10z" fill="none" stroke="#CED0D6" stroke-width="1.6" stroke-linejoin="round"/></svg>
<div class="chev cd" style="left:1137px;top:1004px;border-color:#B0B3B8"></div>
<div class="a" style="left:342px;top:1043px;width:802px;height:35px;border-radius:6px;background:#43454A"></div>
<svg class="a" style="left:356px;top:1051px" width="22" height="20" viewBox="0 0 22 20"><path d="M7 3L2.5 7.5 7 12" fill="none" stroke="#CED0D6" stroke-width="1.6"/><path d="M3 7.5h9a6 6 0 0 1 0 12H9" fill="none" stroke="#CED0D6" stroke-width="1.6"/></svg>
<div class="a" style="left:330px;top:1037px;width:825px;height:307px;overflow:hidden">
<div class="t" style="left:52px;top:6px">getRememberedPrincipals:396, AbstractRememberMeManager <i style="color:#868A91">(org.apache.shiro.mgt)</i></div>
<div class="t" style="left:52px;top:42px">getRememberedIdentity:604, DefaultSecurityManager <i style="color:#868A91">(org.apache.shiro.mgt)</i></div>
<div class="t" style="left:52px;top:78px">resolvePrincipals:492, DefaultSecurityManager <i style="color:#868A91">(org.apache.shiro.mgt)</i></div>
<div class="t" style="left:52px;top:114px">createSubject:342, DefaultSecurityManager <i style="color:#868A91">(org.apache.shiro.mgt)</i></div>
<div class="t" style="left:52px;top:150px">buildSubject:846, Subject$Builder <i style="color:#868A91">(org.apache.shiro.subject)</i></div>
<div class="t" style="left:52px;top:186px">buildWebSubject:148, WebSubject$Builder <i style="color:#868A91">(org.apache.shiro.web.subject)</i></div>
<div class="t" style="left:52px;top:222px">createSubject:292, AbstractShiroFilter <i style="color:#868A91">(org.apache.shiro.web.servlet)</i></div>
<div class="t" style="left:52px;top:258px">doFilterInternal:359, AbstractShiroFilter <i style="color:#868A91">(org.apache.shiro.web.servlet)</i></div>
<div class="t" style="left:52px;top:294px">doFilter:125, OncePerRequestFilter <i style="color:#868A91">(org.apache.shiro.web.servlet)</i></div>
</div>
<div class="a" style="left:1155px;top:1038px;width:12px;height:254px;background:#4B4D51"></div>
<div class="t" style="left:342px;top:1346px;font-size:17px;color:#6F737A">使用 Ctrl+Alt+向上箭头 和 Ctrl+Alt+向下箭头 从 IDE 中的任意位置切换帧</div>
<svg class="a" style="left:1143px;top:1356px" width="14" height="14" viewBox="0 0 14 14"><path d="M1.5 1.5l11 11M12.5 1.5l-11 11" stroke="#8C8F94" stroke-width="1.5"/></svg>
<div class="a" style="left:1169px;top:987px;width:1238px;height:48px;background:#393B40"></div>
<div class="a" style="left:1168px;top:987px;width:1px;height:388px;background:#1E1F22"></div>
<div class="a" style="left:1169px;top:1035px;width:1238px;height:2px;background:#1E1F22"></div>
<div class="code" style="left:1187px;top:995px;font-size:18px;line-height:33px;color:#6F737A">对表达式求值(Enter)或添加监视(Ctrl+Shift+Enter)</div>
<svg class="a" style="left:2348px;top:1000px" width="26" height="26" viewBox="0 0 26 26"><path d="M12 1v13M5.5 7.5h13" stroke="#6F737A" stroke-width="1.4"/><circle cx="8" cy="20" r="3.3" fill="none" stroke="#6F737A" stroke-width="1.4"/><circle cx="17" cy="20" r="3.3" fill="none" stroke="#6F737A" stroke-width="1.4"/></svg>
<div class="chev cd" style="left:2396px;top:1004px;border-color:#6F737A"></div>
<div class="chev cd" style="left:1194px;top:1053px"></div>
<svg class="a" style="left:1222px;top:1049px" width="18" height="24" viewBox="0 0 18 24"><rect x="1.5" y="2" width="15" height="5" rx="1.5" fill="#3C3520" stroke="#E0B03A" stroke-width="1.6"/><rect x="1.5" y="9.5" width="15" height="5" rx="1.5" fill="#3C3520" stroke="#E0B03A" stroke-width="1.6"/><rect x="1.5" y="17" width="15" height="5" rx="1.5" fill="#3C3520" stroke="#E0B03A" stroke-width="1.6"/></svg>
<div class="t" style="left:1248px;top:1043px"><span style="color:#E8A46C">this</span> = <span style="color:#868A91">{CookieRememberMeManager@3871}</span></div>
<div class="chev cr" style="left:1220px;top:1092px"></div>
<svg class="a" style="left:1249px;top:1086px" width="22" height="22" viewBox="0 0 22 22"><circle cx="11" cy="11" r="9.3" fill="#47302A" stroke="#E0875A" stroke-width="1.6"/><text x="11" y="16" text-anchor="middle" font-family="Liberation Sans" font-size="14" fill="#E0875A">f</text></svg>
<div class="t" style="left:1276px;top:1079px"><span style="color:#E8A46C">cookie</span> = <span style="color:#868A91">{SimpleCookie@3873}</span></div>
<div class="chev cr" style="left:1220px;top:1128px"></div>
<svg class="a" style="left:1249px;top:1122px" width="22" height="22" viewBox="0 0 22 22"><circle cx="11" cy="11" r="9.3" fill="#47302A" stroke="#E0875A" stroke-width="1.6"/><text x="11" y="16" text-anchor="middle" font-family="Liberation Sans" font-size="14" fill="#E0875A">f</text></svg>
<div class="t" style="left:1276px;top:1115px"><span style="color:#E8A46C">serializer</span> = <span style="color:#868A91">{DefaultSerializer@3874}</span></div>
<div class="chev cr" style="left:1220px;top:1164px"></div>
<svg class="a" style="left:1249px;top:1158px" width="22" height="22" viewBox="0 0 22 22"><circle cx="11" cy="11" r="9.3" fill="#47302A" stroke="#E0875A" stroke-width="1.6"/><text x="11" y="16" text-anchor="middle" font-family="Liberation Sans" font-size="14" fill="#E0875A">f</text></svg>
<div class="t" style="left:1276px;top:1151px"><span style="color:#E8A46C">cipherService</span> = <span style="color:#868A91">{AesCipherService@3875}</span></div>
<div class="chev cr" style="left:1220px;top:1200px"></div>
<svg class="a" style="left:1249px;top:1194px" width="22" height="22" viewBox="0 0 22 22"><circle cx="11" cy="11" r="9.3" fill="#47302A" stroke="#E0875A" stroke-width="1.6"/><text x="11" y="16" text-anchor="middle" font-family="Liberation Sans" font-size="14" fill="#E0875A">f</text></svg>
<div class="t" style="left:1276px;top:1187px"><span style="color:#E8A46C">encryptionCipherKey</span> = <span style="color:#868A91">{byte[16]@3876}</span> [-112, -15, -2, 108, -116, 100, -28, 61, -99, 121, -104, -120, -59, -58, -102, 104]</div>
<div class="chev cr" style="left:1220px;top:1236px"></div>
<svg class="a" style="left:1249px;top:1230px" width="22" height="22" viewBox="0 0 22 22"><circle cx="11" cy="11" r="9.3" fill="#47302A" stroke="#E0875A" stroke-width="1.6"/><text x="11" y="16" text-anchor="middle" font-family="Liberation Sans" font-size="14" fill="#E0875A">f</text></svg>
<div class="t" style="left:1276px;top:1223px"><span style="color:#E8A46C">decryptionCipherKey</span> = <span style="color:#868A91">{byte[16]@3876}</span> [-112, -15, -2, 108, -116, 100, -28, 61, -99, 121, -104, -120, -59, -58, -102, 104]</div>
<div class="chev cr" style="left:1192px;top:1272px"></div>
<svg class="a" style="left:1221px;top:1266px" width="22" height="22" viewBox="0 0 22 22"><circle cx="11" cy="11" r="9.3" fill="#47302A" stroke="#E0875A" stroke-width="1.6"/><text x="11" y="16" text-anchor="middle" font-family="Liberation Sans" font-size="14" fill="#E0875A">p</text></svg>
<div class="t" style="left:1248px;top:1259px"><span style="color:#E8A46C">subjectContext</span> = <span style="color:#868A91">{DefaultWebSubjectContext@3883}</span>  size = 3</div>
<svg class="a" style="left:1222px;top:1301px" width="18" height="24" viewBox="0 0 18 24"><rect x="1.5" y="2" width="15" height="5" rx="1.5" fill="#3C3520" stroke="#E0B03A" stroke-width="1.6"/><rect x="1.5" y="9.5" width="15" height="5" rx="1.5" fill="#3C3520" stroke="#E0B03A" stroke-width="1.6"/><rect x="1.5" y="17" width="15" height="5" rx="1.5" fill="#3C3520" stroke="#E0B03A" stroke-width="1.6"/></svg>
<div class="t" style="left:1248px;top:1295px"><span style="color:#E8A46C">principals</span> = null</div>
<div class="chev cr" style="left:1192px;top:1344px"></div>
<svg class="a" style="left:1219px;top:1338px" width="24" height="22" viewBox="0 0 24 22"><text x="0" y="10" font-family="Liberation Sans" font-size="9" fill="#CED0D6">1</text><text x="0" y="20" font-family="Liberation Sans" font-size="9" fill="#CED0D6">2</text><rect x="7" y="2" width="15" height="7" rx="2" fill="#25324D" stroke="#548AF7" stroke-width="1.6"/><rect x="7" y="12.5" width="15" height="7" rx="2" fill="#25324D" stroke="#548AF7" stroke-width="1.6"/></svg>
<div class="t" style="left:1248px;top:1331px"><span style="color:#E8A46C">bytes</span> = <span style="color:#868A91">{byte[304]@3900}</span> [-91, -20, -118, -98, -44, 89, 76, 35, -73, -26, 82, -21, 45, 2, -54, -107, 70, 92, 103, -91, 0, 66, -50, -62, 47, <span style="color:#548AF7">...视图</span></div>
<div class="a" style="left:1171px;top:1365px;width:387px;height:10px;background:#4B4D51"></div>
<!--/BOTTOM-->

</body></html>
